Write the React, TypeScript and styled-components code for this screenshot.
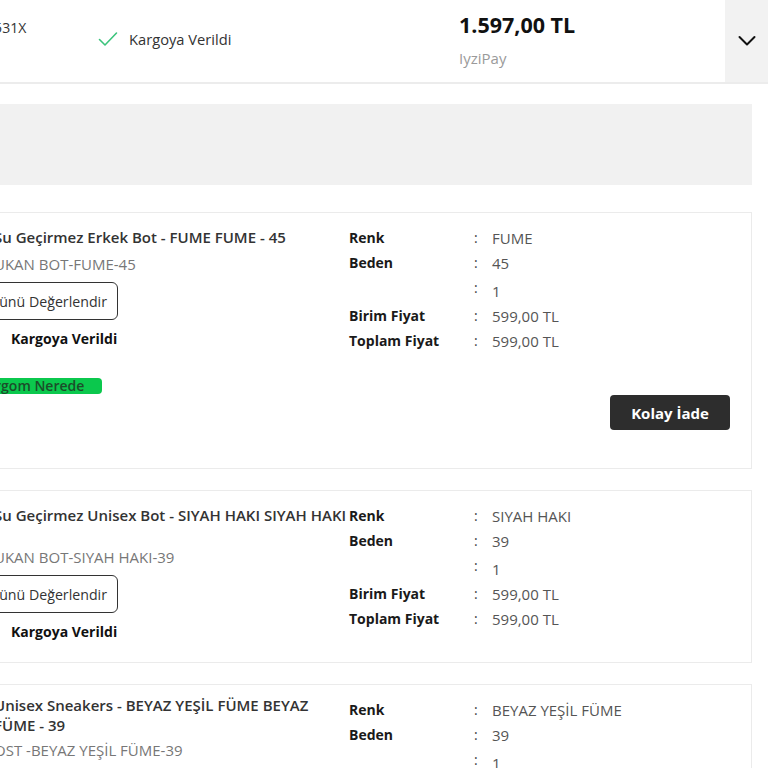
import styled, { createGlobalStyle } from 'styled-components'

const GlobalStyle = createGlobalStyle`
  html, body {
    margin: 0;
    padding: 0;
    background: #ffffff;
    overflow: hidden;
  }
  body {
    font-family: 'Open Sans', 'Liberation Sans', Arial, sans-serif;
    color: #333333;
  }
`

const Page = styled.div`
  margin-left: -60px;
  width: 828px;
`

const OrderHeader = styled.div`
  display: flex;
  height: 82px;
  border-bottom: 2px solid #ececec;
`

const OrderNo = styled.div`
  width: 158px;
  padding: 18px 0 0 0;
  margin-left: -2px;
  margin-right: 4px;
  font-size: 14px;
  color: #333;
  white-space: nowrap;
  overflow: hidden;
`

const HeaderStatus = styled.div`
  width: 359px;
  display: flex;
  align-items: center;
  gap: 11px;
  margin-left: -2px;
  margin-right: 2px;
  padding-bottom: 4px;
  font-size: 14.7px;
  color: #333;
`

const PriceCell = styled.div`
  flex: 1;
  padding-top: 10px;
  display: flex;
  flex-direction: column;
  gap: 9px;
`

const Price = styled.div`
  font-size: 21.5px;
  font-weight: 700;
  color: #111;
`

const PayMethod = styled.div`
  font-size: 15px;
  color: #9a9a9a;
`

const Toggle = styled.div`
  width: 43px;
  background: #f2f2f2;
  display: flex;
  align-items: center;
  justify-content: center;
`

const Content = styled.div`
  padding: 20px 16px 0 0;
  display: flex;
  flex-direction: column;
`

const InfoBox = styled.div`
  height: 81px;
  background: #f1f1f1;
  margin-bottom: 27px;
`

const Card = styled.div`
  border: 1px solid #ebebeb;
  border-left: none;
  padding: 12px 21px 20px 30px;
  margin-bottom: 21px;
`

const CardBody = styled.div`
  display: grid;
  grid-template-columns: 379px 1fr;
`

const ProductCol = styled.div`
  display: flex;
  flex-direction: column;
  align-items: flex-start;
`

const ProductText = styled.div<{ $gap?: number; $lift?: number }>`
  padding-left: 24px;
  margin-top: ${({ $lift }) => 2 - ($lift ?? 0)}px;
  margin-bottom: ${({ $gap }) => $gap ?? 7}px;
  width: 330px;
  font-size: 15px;
  font-weight: 600;
  line-height: 20px;
  color: #333;
`

const ProductName = styled.div<{ $nowrap?: boolean }>`
  white-space: ${({ $nowrap }) => ($nowrap ? 'nowrap' : 'normal')};
`

const ProductCode = styled.div`
  padding-left: 24px;
  font-size: 15px;
  line-height: 20px;
  color: #777;
  white-space: nowrap;
`

const OutlineButton = styled.button`
  margin-top: 8px;
  height: 38px;
  padding: 0 10px 0 12px;
  border: 1px solid #333;
  border-radius: 6px;
  background: #fff;
  font-family: inherit;
  font-size: 14.2px;
  color: #333;
`

const ItemStatus = styled.div`
  margin-top: 9px;
  padding-left: 41px;
  font-size: 14px;
  font-weight: 700;
  line-height: 20px;
  color: #111;
`

const TrackBadge = styled.div`
  margin-top: 29px;
  height: 16px;
  padding: 0 18px 0 8px;
  border-radius: 4px;
  background: #0bc84d;
  color: #1c4d2a;
  font-size: 14px;
  font-weight: 600;
  line-height: 16px;
`

const Details = styled.div`
  display: grid;
  grid-template-columns: 125px 18px 1fr;
  grid-template-rows: 25px 25px 28px 25px 25px;
  align-items: center;
`

const Label = styled.div`
  font-size: 14px;
  font-weight: 700;
  color: #1a1a1a;
`

const Colon = styled.div<{ $high?: boolean }>`
  font-size: 14px;
  color: #444;
  padding-bottom: ${({ $high }) => ($high ? '3px' : '0')};
`

const Value = styled.div<{ $low?: boolean }>`
  font-size: 15px;
  color: #555;
  padding-top: ${({ $low }) => ($low ? '4px' : '0')};
`

const Footer = styled.div`
  display: flex;
  justify-content: flex-end;
  margin-top: 1px;
  margin-bottom: 18px;
`

const DarkButton = styled.button`
  width: 120px;
  height: 35px;
  border: none;
  border-radius: 4px;
  background: #2d2d2d;
  color: #fff;
  font-family: inherit;
  font-size: 15px;
  font-weight: 700;
`

type Item = {
  name: string
  code: string
  color: string
  size: string
  qty: string
  unit?: string
  total?: string
  nowrap?: boolean
  gap?: number
  lift?: number
  actions?: boolean
  track?: boolean
  returnable?: boolean
}

const items: Item[] = [
  {
    name: 'Su Geçirmez Erkek Bot - FUME FUME - 45',
    code: 'UKAN BOT-FUME-45',
    color: 'FUME',
    size: '45',
    qty: '1',
    unit: '599,00 TL',
    total: '599,00 TL',
    actions: true,
    track: true,
    returnable: true,
  },
  {
    name: 'Su Geçirmez Unisex Bot - SIYAH HAKI SIYAH HAKI',
    code: 'UKAN BOT-SIYAH HAKI-39',
    color: 'SIYAH HAKI',
    size: '39',
    qty: '1',
    unit: '599,00 TL',
    total: '599,00 TL',
    nowrap: true,
    gap: 22,
    actions: true,
  },
  {
    name: 'Unisex Sneakers - BEYAZ YEŞİL FÜME BEYAZ FÜME - 39',
    code: 'OST -BEYAZ YEŞİL FÜME-39',
    color: 'BEYAZ YEŞİL FÜME',
    size: '39',
    qty: '1',
    lift: 4,
    gap: 5,
  },
]

function Check() {
  return (
    <svg width="20" height="16" viewBox="0 0 20 16" fill="none">
      <path d="M1.5 8.5 L7 14 L18.5 2" stroke="#3cc47c" strokeWidth="1.6" strokeLinecap="round" strokeLinejoin="round" />
    </svg>
  )
}

function Chevron() {
  return (
    <svg width="18" height="12" viewBox="0 0 18 12" fill="none">
      <path d="M1.5 2 L9 9.5 L16.5 2" stroke="#111" strokeWidth="2" strokeLinecap="round" strokeLinejoin="round" />
    </svg>
  )
}

function ProductCard({ item }: { item: Item }) {
  return (
    <Card>
      <CardBody>
        <ProductCol>
          <ProductText $gap={item.gap} $lift={item.lift}>
            <ProductName $nowrap={item.nowrap}>{item.name}</ProductName>
          </ProductText>
          <ProductCode>{item.code}</ProductCode>
          {item.actions && (
            <>
              <OutlineButton>Ürünü Değerlendir</OutlineButton>
              <ItemStatus>Kargoya Verildi</ItemStatus>
            </>
          )}
          {item.track && <TrackBadge>Kargom Nerede</TrackBadge>}
        </ProductCol>
        <Details>
          <Label>Renk</Label>
          <Colon>:</Colon>
          <Value>{item.color}</Value>
          <Label>Beden</Label>
          <Colon>:</Colon>
          <Value>{item.size}</Value>
          <Label />
          <Colon $high>:</Colon>
          <Value $low>{item.qty}</Value>
          {item.unit && (
            <>
              <Label>Birim Fiyat</Label>
              <Colon>:</Colon>
              <Value>{item.unit}</Value>
              <Label>Toplam Fiyat</Label>
              <Colon>:</Colon>
              <Value>{item.total}</Value>
            </>
          )}
        </Details>
      </CardBody>
      {item.returnable && (
        <Footer>
          <DarkButton>Kolay İade</DarkButton>
        </Footer>
      )}
    </Card>
  )
}

export default function App() {
  return (
    <Page>
      <GlobalStyle />
      <OrderHeader>
        <OrderNo>SP12024531X</OrderNo>
        <HeaderStatus>
          <Check />
          Kargoya Verildi
        </HeaderStatus>
        <PriceCell>
          <Price>1.597,00 TL</Price>
          <PayMethod>IyziPay</PayMethod>
        </PriceCell>
        <Toggle>
          <Chevron />
        </Toggle>
      </OrderHeader>
      <Content>
        <InfoBox />
        {items.map((item) => (
          <ProductCard key={item.code} item={item} />
        ))}
      </Content>
    </Page>
  )
}
